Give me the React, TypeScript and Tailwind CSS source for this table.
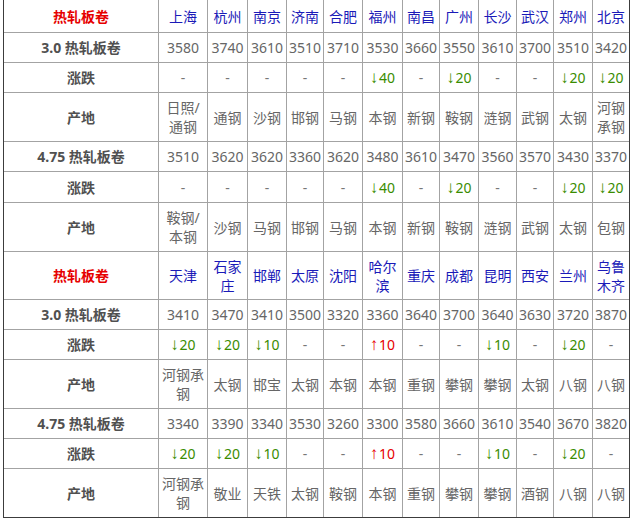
import React from "react";

type Sec = {
  cities: string[];
  p30: string[];
  c30: string[];
  o30: string[];
  p475: string[];
  c475: string[];
  o475: string[];
};

const s1: Sec = {
  cities: ["上海", "杭州", "南京", "济南", "合肥", "福州", "南昌", "广州", "长沙", "武汉", "郑州", "北京"],
  p30: ["3580", "3740", "3610", "3510", "3710", "3530", "3660", "3550", "3610", "3700", "3510", "3420"],
  c30: ["-", "-", "-", "-", "-", "↓40", "-", "↓20", "-", "-", "↓20", "↓20"],
  o30: ["日照/\n通钢", "通钢", "沙钢", "邯钢", "马钢", "本钢", "新钢", "鞍钢", "涟钢", "武钢", "太钢", "河钢\n承钢"],
  p475: ["3510", "3620", "3620", "3360", "3620", "3480", "3610", "3470", "3560", "3570", "3430", "3370"],
  c475: ["-", "-", "-", "-", "-", "↓40", "-", "↓20", "-", "-", "↓20", "↓20"],
  o475: ["鞍钢/\n本钢", "沙钢", "马钢", "邯钢", "马钢", "本钢", "新钢", "鞍钢", "涟钢", "武钢", "太钢", "包钢"],
};

const s2: Sec = {
  cities: ["天津", "石家\n庄", "邯郸", "太原", "沈阳", "哈尔\n滨", "重庆", "成都", "昆明", "西安", "兰州", "乌鲁\n木齐"],
  p30: ["3410", "3470", "3410", "3500", "3320", "3360", "3640", "3700", "3640", "3630", "3720", "3870"],
  c30: ["↓20", "↓20", "↓10", "-", "-", "↑10", "-", "-", "↓10", "-", "↓20", "-"],
  o30: ["河钢承\n钢", "太钢", "邯宝", "太钢", "本钢", "本钢", "重钢", "攀钢", "攀钢", "太钢", "八钢", "八钢"],
  p475: ["3340", "3390", "3340", "3530", "3260", "3300", "3580", "3660", "3610", "3540", "3670", "3820"],
  c475: ["↓20", "↓20", "↓10", "-", "-", "↑10", "-", "-", "↓10", "-", "↓20", "-"],
  o475: ["河钢承\n钢", "敬业", "天铁", "太钢", "鞍钢", "本钢", "重钢", "攀钢", "攀钢", "酒钢", "八钢", "八钢"],
};

const cell = "bg-white flex items-center justify-center text-center whitespace-pre-line leading-[19px]";

function Label({ text, red }: { text: string; red?: boolean }) {
  return (
    <div className={`${cell} font-bold ${red ? "text-[#e60000]" : "text-[#505050]"}`}>{text}</div>
  );
}

function Change({ v }: { v: string }) {
  if (v === "-") return <div className={`${cell} text-[#777777]`}>-</div>;
  const up = v.startsWith("↑");
  return (
    <div className={`${cell} ${up ? "text-[#e60000]" : "text-[#3a8c00]"}`}>
      <span className="inline-flex justify-center w-[8px] mr-[1px] text-[17px] font-['Liberation_Sans'] overflow-visible">{v[0]}</span>
      <span>{v.slice(1)}</span>
    </div>
  );
}

function Section({ s }: { s: Sec }) {
  return (
    <>
      <Label text="热轧板卷" red />
      {s.cities.map((c, i) => (
        <div key={"c" + i} className={`${cell} text-[#1a1ab8]`}>{c}</div>
      ))}
      <Label text="3.0 热轧板卷" />
      {s.p30.map((c, i) => (
        <div key={"a" + i} className={`${cell} text-[#666666]`}>{c}</div>
      ))}
      <Label text="涨跌" />
      {s.c30.map((c, i) => (
        <Change key={"b" + i} v={c} />
      ))}
      <Label text="产地" />
      {s.o30.map((c, i) => (
        <div key={"d" + i} className={`${cell} text-[#666666]`}>{c}</div>
      ))}
      <Label text="4.75 热轧板卷" />
      {s.p475.map((c, i) => (
        <div key={"e" + i} className={`${cell} text-[#666666]`}>{c}</div>
      ))}
      <Label text="涨跌" />
      {s.c475.map((c, i) => (
        <Change key={"f" + i} v={c} />
      ))}
      <Label text="产地" />
      {s.o475.map((c, i) => (
        <div key={"g" + i} className={`${cell} text-[#666666]`}>{c}</div>
      ))}
    </>
  );
}

export default function App() {
  return (
    <div className="w-[635px] h-[522px] bg-white overflow-hidden font-['Noto_Sans','Noto_Sans_CJK_SC',sans-serif] text-[14px]">
      <div className="ml-[3px] w-max grid grid-cols-[154px_48px_39px_38px_36px_38px_39px_36px_38px_37px_36px_38px_36px] grid-rows-[32px_29px_29px_48px_29px_30px_48px_47px_29px_29px_48px_29px_29px_48px] gap-px bg-[#a3a3a3] border-l border-r border-b border-[#3c3c3c]">
        <Section s={s1} />
        <Section s={s2} />
      </div>
    </div>
  );
}
